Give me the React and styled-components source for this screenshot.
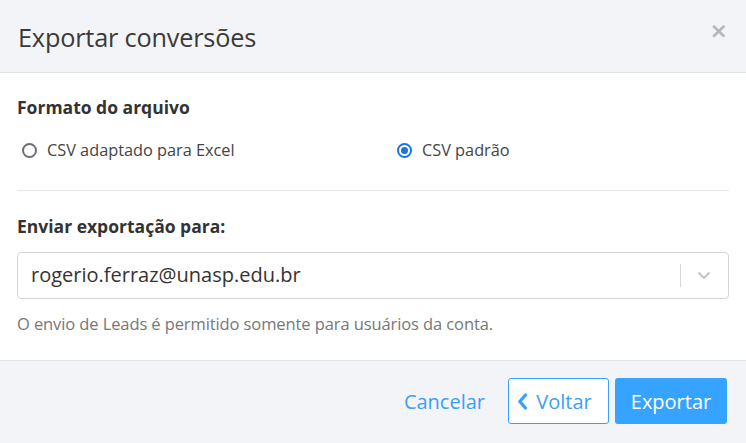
import React, { useState } from "react";
import styled, { createGlobalStyle } from "styled-components";

const Global = createGlobalStyle`
  html, body { margin: 0; padding: 0; background: #ffffff; }
  body { font-family: "Open Sans", "Noto Sans", sans-serif; color: #333; }
  * { box-sizing: border-box; }
`;

const Modal = styled.div`
  width: 746px;
  height: 443px;
  display: flex;
  flex-direction: column;
  background: #fff;
`;

const Header = styled.div`
  height: 73px;
  flex: none;
  background: #f3f4f8;
  border-bottom: 1px solid #e1e2e6;
  display: flex;
  align-items: center;
  justify-content: space-between;
  padding: 0 20px 0 18px;
`;

const Title = styled.h2`
  margin: 0;
  font-size: 25.3px;
  line-height: 34px;
  font-weight: 400;
  color: #3a3a3a;
  letter-spacing: -0.2px;
  padding-top: 2px;
`;

const Close = styled.button`
  border: 0;
  background: none;
  padding: 0;
  color: #b5b5b8;
  font-size: 22px;
  line-height: 1;
  cursor: pointer;
  font-family: "DejaVu Sans", sans-serif;
  margin-top: -10px;
  margin-right: -2px;
  font-weight: 700;
`;

const Body = styled.div`
  flex: 1;
  padding: 22px 17px 0 17px;
  display: flex;
  flex-direction: column;
`;

const Label = styled.div`
  font-size: 17.5px;
  font-weight: 700;
  color: #333;
  line-height: 24px;
`;

const RadioRow = styled.div`
  display: grid;
  grid-template-columns: 375px 1fr;
  padding: 20px 0 0 6px;
  height: 72px;
  border-bottom: 1px solid #e8e8ec;
`;

const RadioLabel = styled.label`
  display: flex;
  align-items: flex-start;
  gap: 10px;
  font-size: 16.3px;
  color: #444;
  line-height: 22px;
  cursor: pointer;
`;

const RadioDot = styled.span`
  width: 15px;
  height: 15px;
  margin-top: 4px;
  margin-left: -1px;
  border-radius: 50%;
  border: 2px solid ${(p) => (p.$checked ? "#1a73e8" : "#6e6e78")};
  display: flex;
  align-items: center;
  justify-content: center;
  flex: none;
  &::after {
    content: "";
    width: 7px;
    height: 7px;
    border-radius: 50%;
    background: ${(p) => (p.$checked ? "#1a73e8" : "transparent")};
  }
`;

const SecondLabel = styled(Label)`
  margin-top: 23px;
`;

const Select = styled.div`
  margin-top: 14px;
  height: 47px;
  border: 1px solid #d3d5da;
  border-radius: 4px;
  display: flex;
  align-items: center;
  padding-left: 13px;
`;

const SelectValue = styled.div`
  flex: 1;
  font-size: 20px;
  line-height: 28px;
  color: #333;
  padding-bottom: 1px;
`;

const Indicator = styled.div`
  width: 48px;
  height: 100%;
  display: flex;
  align-items: center;
  justify-content: center;
  position: relative;
  &::before {
    content: "";
    position: absolute;
    left: 0;
    top: 11px;
    bottom: 11px;
    width: 1px;
    background: #d6d7db;
  }
`;

const Help = styled.div`
  margin-top: 14px;
  font-size: 16.5px;
  line-height: 22px;
  color: #777;
  letter-spacing: -0.1px;
`;

const Footer = styled.div`
  height: 83px;
  flex: none;
  background: #f3f4f8;
  border-top: 1px solid #e1e2e6;
  display: flex;
  align-items: center;
  justify-content: flex-end;
  padding: 0 19px 2px 0;
  gap: 6px;
`;

const LinkButton = styled.button`
  border: 0;
  background: none;
  font-family: inherit;
  font-size: 20px;
  color: #3aa0f5;
  padding: 0 12px;
  height: 46px;
  margin-right: 5px;
  cursor: pointer;
`;

const OutlineButton = styled.button`
  height: 46px;
  width: 101px;
  border: 1px solid #3aa0ff;
  border-radius: 3px;
  background: #fff;
  color: #3aa0f5;
  font-family: inherit;
  font-size: 20px;
  display: flex;
  align-items: center;
  justify-content: center;
  gap: 8px;
  padding: 0 8px 0 0;
  cursor: pointer;
`;

const PrimaryButton = styled.button`
  height: 46px;
  width: 112px;
  border: 0;
  border-radius: 3px;
  background: #35a3ff;
  color: #fff;
  font-family: inherit;
  font-size: 20px;
  cursor: pointer;
`;

export default function App() {
  const [fmt, setFmt] = useState("std");
  return (
    <>
      <Global />
      <Modal>
        <Header>
          <Title>Exportar conversões</Title>
          <Close aria-label="Fechar">×</Close>
        </Header>
        <Body>
          <Label>Formato do arquivo</Label>
          <RadioRow>
            <RadioLabel onClick={() => setFmt("excel")}>
              <RadioDot $checked={fmt === "excel"} />
              CSV adaptado para Excel
            </RadioLabel>
            <RadioLabel onClick={() => setFmt("std")}>
              <RadioDot $checked={fmt === "std"} />
              CSV padrão
            </RadioLabel>
          </RadioRow>
          <SecondLabel>Enviar exportação para:</SecondLabel>
          <Select>
            <SelectValue>rogerio.ferraz@unasp.edu.br</SelectValue>
            <Indicator>
              <svg width="14" height="9" viewBox="0 0 14 9">
                <path d="M1.5 1.5 L7 7 L12.5 1.5" fill="none" stroke="#c4c5c9" strokeWidth="2.2" />
              </svg>
            </Indicator>
          </Select>
          <Help>O envio de Leads é permitido somente para usuários da conta.</Help>
        </Body>
        <Footer>
          <LinkButton>Cancelar</LinkButton>
          <OutlineButton>
            <svg width="11" height="17" viewBox="0 0 11 17">
              <path d="M8.5 2 L2.8 8.5 L8.5 15" fill="none" stroke="#3aa0f5" strokeWidth="3.2" strokeLinecap="round" strokeLinejoin="round" />
            </svg>
            Voltar
          </OutlineButton>
          <PrimaryButton>Exportar</PrimaryButton>
        </Footer>
      </Modal>
    </>
  );
}
